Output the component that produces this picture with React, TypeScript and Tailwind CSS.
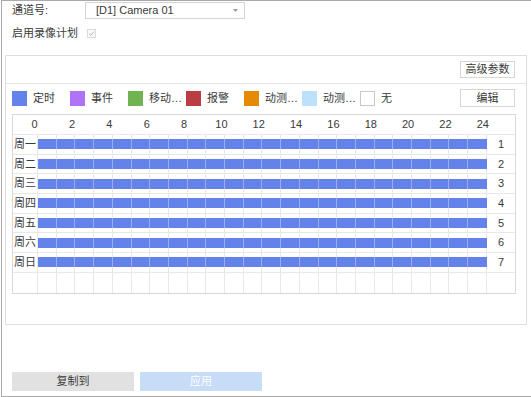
import React from "react";

const days = ["周一", "周二", "周三", "周四", "周五", "周六", "周日"];
const hours = Array.from({ length: 24 }, (_, i) => i);
const labels = [0, 2, 4, 6, 8, 10, 12, 14, 16, 18, 20, 22, 24];

const legend = [
  { c: "bg-[#6382ea]", b: "border-[#6382ea]", t: "定时" },
  { c: "bg-[#b073f7]", b: "border-[#b073f7]", t: "事件" },
  { c: "bg-[#70b452]", b: "border-[#70b452]", t: "移动…" },
  { c: "bg-[#b93d43]", b: "border-[#b93d43]", t: "报警" },
  { c: "bg-[#e68a05]", b: "border-[#e68a05]", t: "动测…" },
  { c: "bg-[#bde0fb]", b: "border-[#bde0fb]", t: "动测…" },
  { c: "bg-white", b: "border-[#c8c8c8]", t: "无" },
];

export default function App() {
  return (
    <div
      className="w-[530px] h-[397px] ml-px border-t border-l border-b border-[#a9a9a9] bg-white text-[11px] text-[#3a3a3a] leading-none"
      style={{ fontFamily: '"Liberation Sans", "Noto Sans CJK SC", sans-serif' }}
    >
      {/* channel row */}
      <div className="flex items-center h-[17px] mt-px pl-[10px]">
        <div className="w-[73px]">通道号:</div>
        <div className="w-[160px] h-[17px] border border-[#d4d4d4] flex items-center pl-[10px] pr-[6px]">
          <span className="flex-1">[D1] Camera 01</span>
          <svg width="5" height="3" viewBox="0 0 5 3">
            <path d="M0 0 L5 0 L2.5 3 Z" fill="#9a9a9a" />
          </svg>
        </div>
      </div>
      {/* enable row */}
      <div className="flex items-center h-[17px] mt-[6px] pl-[10px]">
        <div className="w-[75px]">启用录像计划</div>
        <svg width="9" height="9" viewBox="0 0 9 9">
          <rect x="0.5" y="0.5" width="8" height="8" fill="#fafafa" stroke="#dadada" />
          <path d="M2 4.6 L3.8 6.3 L7 2.6" fill="none" stroke="#a9b8d6" strokeWidth="1" />
        </svg>
      </div>

      {/* panel */}
      <div className="ml-[3px] mt-[13px] w-[522px] h-[270px] border border-[#dedede] flex flex-col">
        <div className="h-[28px] border-b border-[#e3e3e3] flex justify-end items-start pt-[5px] pr-[11px]">
          <button className="w-[55px] h-[17px] border border-[#d6d6d6] bg-white text-[11px] text-[#3a3a3a] flex items-center justify-center">
            高级参数
          </button>
        </div>
        <div className="flex items-center h-[18px] mt-[5px] pl-[6px] pr-[11px]">
          <div className="flex flex-1">
            {legend.map((l, i) => (
              <div key={i} className="w-[58px] flex items-center">
                <span className={`w-[15px] h-[15px] border ${l.c} ${l.b}`} />
                <span className="ml-[6px]">{l.t}</span>
              </div>
            ))}
          </div>
          <button className="w-[55px] h-[18px] border border-[#d6d6d6] bg-white text-[11px] text-[#3a3a3a] flex items-center justify-center">
            编辑
          </button>
        </div>

        {/* grid */}
        <div className="mt-[7px] ml-[6px] w-[504px] border border-[#d8d8d8]">
          <div className="h-[20px] border-b border-[#e8e8e8] flex items-center">
            <div className="w-[3px]" />
            {labels.map((n) => (
              <div key={n} className="w-[37.35px] text-center">
                {n}
              </div>
            ))}
          </div>
          {days.map((d, di) => (
            <div key={d} className="h-[19.7px] border-b border-[#e8e8e8] flex">
              <div className="w-[25px] border-r border-[#e8e8e8] flex items-center justify-center">{d}</div>
              <div className="w-[449px] flex">
                {hours.map((h) => (
                  <div key={h} className="flex-1 border-r border-[#e8e8e8] flex items-center">
                    <div
                      className={`h-[10px] w-[calc(100%+1px)] -mr-px bg-[#6382ea] ${
                        h === 23 ? "" : "border-r border-[#9dabf0]"
                      }`}
                    />
                  </div>
                ))}
              </div>
              <div className="flex-1 flex items-center justify-center">{di + 1}</div>
            </div>
          ))}
          <div className="h-[20px] flex">
            <div className="w-[25px] border-r border-[#e8e8e8]" />
            <div className="w-[449px] flex">
              {hours.map((h) => (
                <div key={h} className="flex-1 border-r border-[#e8e8e8]" />
              ))}
            </div>
            <div className="flex-1" />
          </div>
        </div>
      </div>

      {/* bottom buttons */}
      <div className="flex mt-[47px] ml-[10px] gap-[6px]">
        <button className="w-[122px] h-[19px] bg-[#e1e1e1] text-[11px] text-[#3a3a3a] flex items-center justify-center">
          复制到
        </button>
        <button className="w-[122px] h-[19px] bg-[#c6dcf7] text-[11px] text-white flex items-center justify-center">
          应用
        </button>
      </div>
    </div>
  );
}
